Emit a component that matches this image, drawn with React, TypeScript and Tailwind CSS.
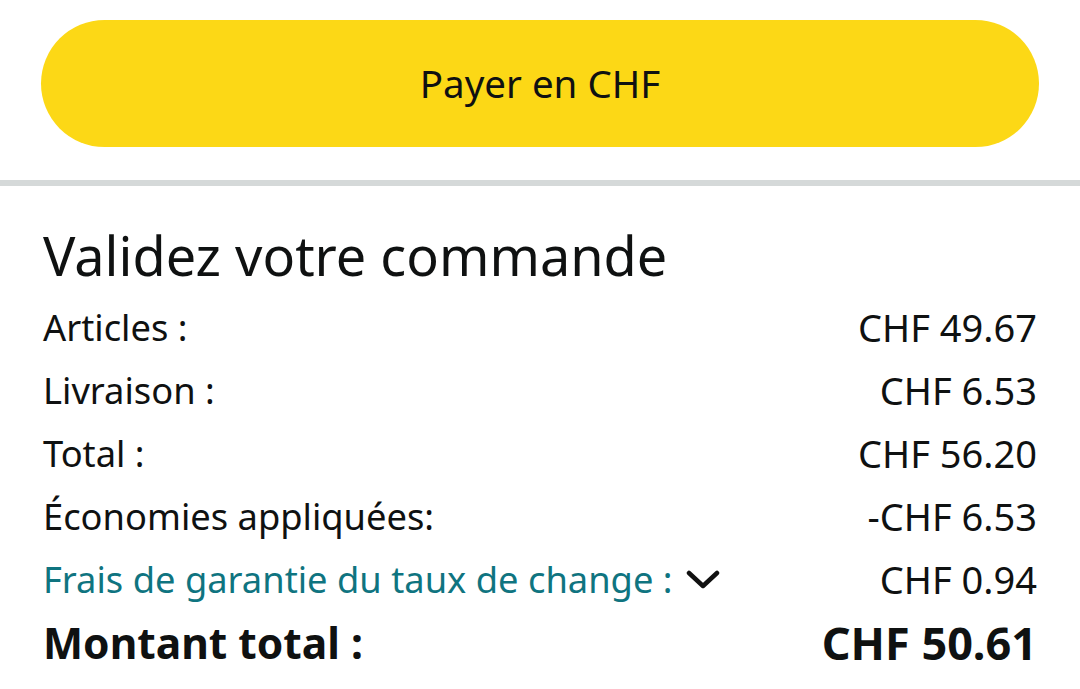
import React from 'react'

const rows = [
  { label: 'Articles :', value: 'CHF 49.67' },
  { label: 'Livraison :', value: 'CHF 6.53' },
  { label: 'Total :', value: 'CHF 56.20' },
  { label: 'Économies appliquées:', value: '-CHF 6.53' },
]

function Chevron() {
  return (
    <svg width="34" height="20" viewBox="0 0 34 20" fill="none" className="ml-[13px]">
      <path d="M3 3 L17 16 L31 3" stroke="#111" strokeWidth="4.5" strokeLinecap="round" strokeLinejoin="round" />
    </svg>
  )
}

export default function App() {
  return (
    <div className="w-[1080px] h-[689px] overflow-hidden bg-white text-[#0f1111]" style={{ fontFamily: '"Noto Sans", sans-serif' }}>
      {/* Pay button */}
      <div className="px-[41px] pt-[20px] pb-[33px]">
        <button className="w-full h-[127px] rounded-full bg-[#fcd816] text-[38.5px] text-[#0f1111] flex items-center justify-center">
          Payer en CHF
        </button>
      </div>

      <div className="h-[6px] bg-[#d5d9d9]" />

      {/* Order summary */}
      <div className="px-[43px] pt-[39px]">
        <h2 className="text-[54px] leading-[60px] font-normal mb-[11px]">Validez votre commande</h2>

        <div className="flex flex-col">
          {rows.map(row => (
            <div key={row.label} className="flex justify-between items-center h-[63px]">
              <span className="text-[36.3px]">{row.label}</span>
              <span className="text-[38px]">{row.value}</span>
            </div>
          ))}

          <div className="flex justify-between items-center h-[63px]">
            <span className="flex items-center text-[36.3px] text-[#0f7480]">
              Frais de garantie du taux de change :
              <Chevron />
            </span>
            <span className="text-[38px]">CHF 0.94</span>
          </div>

          <div className="flex justify-between items-center h-[63px] font-bold">
            <span className="text-[42.5px]">Montant total :</span>
            <span className="text-[45px]">CHF 50.61</span>
          </div>
        </div>
      </div>
    </div>
  )
}
